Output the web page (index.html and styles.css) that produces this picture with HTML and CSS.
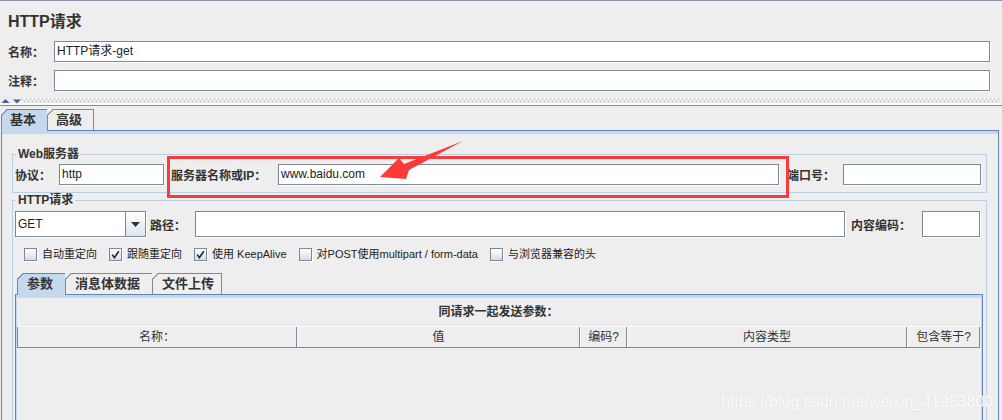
FILE: index.html
```html
<!DOCTYPE html>
<html lang="zh">
<head>
<meta charset="utf-8">
<title>HTTP请求</title>
<link rel="stylesheet" href="styles.css">
</head>
<body>
<div class="app">
  <div class="header">
    <h1 class="title">HTTP请求</h1>
    <div class="form-row"><span class="lbl lbl-top">名称：</span><div class="field grow">HTTP请求-get</div></div>
    <div class="form-row"><span class="lbl lbl-top">注释：</span><div class="field grow"></div></div>
  </div>

  <div class="splitter">
    <svg class="split-arrows" width="22" height="5" viewBox="0 0 22 5">
      <polygon points="1.5,4 5.5,0 9.5,4" fill="#41639a"/>
      <polygon points="13,0.5 21,0.5 17,4.5" fill="#41639a"/>
    </svg>
    <span class="dots"></span>
  </div>

  <div class="tabs main-tabs">
    <div class="tab main-tab selected">基本</div>
    <div class="tab main-tab last">高级</div>
  </div>

  <div class="main-panel">
    <fieldset class="group g-web">
      <legend>Web服务器</legend>
      <div class="row row-web">
        <span class="lbl w-proto">协议：</span>
        <div class="field f-proto">http</div>
        <span class="lbl w-host">服务器名称或IP：</span>
        <div class="field grow">www.baidu.com</div>
        <span class="lbl w-port">端口号：</span>
        <div class="field f-port"></div>
      </div>
    </fieldset>

    <fieldset class="group g-http">
      <legend>HTTP请求</legend>
      <div class="row row-req">
        <div class="combo">
          <div class="combo-text">GET</div>
          <div class="combo-btn">
            <svg width="9" height="5" viewBox="0 0 9 5"><polygon points="0,0 9,0 4.5,5" fill="#333"/></svg>
          </div>
        </div>
        <span class="lbl w-path">路径：</span>
        <div class="field grow tall"></div>
        <span class="lbl w-enc">内容编码：</span>
        <div class="field f-enc tall"></div>
      </div>

      <div class="checks">
        <label class="check"><span class="cb"></span>自动重定向</label>
        <label class="check"><span class="cb"><svg width="9" height="9" viewBox="0 0 9 9"><path d="M1.2 4.6 L3.4 7.6 L7.8 1.2" fill="none" stroke="#222" stroke-width="1.6"/></svg></span>跟随重定向</label>
        <label class="check"><span class="cb"><svg width="9" height="9" viewBox="0 0 9 9"><path d="M1.2 4.6 L3.4 7.6 L7.8 1.2" fill="none" stroke="#222" stroke-width="1.6"/></svg></span>使用 KeepAlive</label>
        <label class="check"><span class="cb"></span>对POST使用multipart / form-data</label>
        <label class="check"><span class="cb"></span>与浏览器兼容的头</label>
      </div>

      <div class="tabs sub-tabs">
        <div class="tab sub-tab selected">参数</div>
        <div class="tab sub-tab">消息体数据</div>
        <div class="tab sub-tab last">文件上传</div>
      </div>
      <div class="sub-panel">
        <div class="caption">同请求一起发送参数：</div>
        <div class="thead">
          <div class="th">名称：</div>
          <div class="th">值</div>
          <div class="th">编码?</div>
          <div class="th">内容类型</div>
          <div class="th">包含等于?</div>
        </div>
      </div>
    </fieldset>
  </div>

  <div class="annot-box"></div>
  <svg class="annot-arrow" width="100" height="60" viewBox="0 0 100 60">
    <polygon points="10,46 29,27 34,33 93,10 39,39 36,48" fill="#fb3a3a"/>
  </svg>
  <div class="watermark">https://blog.csdn.net/weixin_41953800</div>
</div>
</body>
</html>
```

FILE: styles.css
```css
* { box-sizing: border-box; }
html, body { margin: 0; padding: 0; }
body {
  background: #eeeeee;
  font-family: "Liberation Sans", "Noto Sans CJK SC", sans-serif;
  color: #333;
}
.app {
  position: relative;
  width: 1002px;
  height: 420px;
  overflow: hidden;
  border-top: 1px solid #8a98a6;
}

/* header */
.title {
  margin: 11px 0 0 8px;
  font-size: 16px;
  line-height: 20px;
  font-weight: bold;
  color: #333;
}
.form-row {
  display: flex;
  align-items: center;
  height: 21px;
  margin-top: 9px;
  padding: 0 12px 0 8px;
}
.form-row + .form-row { margin-top: 8px; }
.lbl {
  font-size: 12px;
  font-weight: bold;
  white-space: nowrap;
  color: #333;
  flex: none;
}
.lbl-top { width: 46px; }
.field {
  height: 21px;
  border: 1px solid #7a8a99;
  background: #fff;
  box-shadow: 1px 1px 0 #fff;
  font-size: 12px;
  line-height: 19px;
  padding-left: 2px;
  white-space: nowrap;
  overflow: hidden;
  color: #222;
  flex: none;
}
.field.grow { flex: 1; min-width: 0; }
.field.tall { height: 26px; line-height: 24px; }

/* splitter */
.splitter {
  display: flex;
  align-items: flex-start;
  margin-top: 4px;
  height: 11px;
  padding-top: 4px;
  border-bottom: 1px solid #7a8ea8;
  box-shadow: inset 0 -2px 0 #fafafa;
}
.split-arrows { display: block; flex: none; }
.dots {
  flex: 1;
  height: 3px;
  margin-right: 2px;
  background:
    linear-gradient(90deg, #9ca7b3 1px, transparent 1px) 0 0 / 4px 1px repeat-x,
    linear-gradient(90deg, #9ca7b3 1px, transparent 1px) 2px 2px / 4px 1px repeat-x;
}

/* tabs */
.tabs {
  display: flex;
  position: relative;
  z-index: 1;
  margin-bottom: -1px;
}
.main-tabs { margin-top: 3px; padding-left: 1px; }
.tab {
  position: relative;
  height: 22px;
  font-size: 13px;
  font-weight: bold;
  line-height: 20px;
  color: #333;
  background: #eeeeee;
  border-top: 1px solid #7a8a99;
  border-left: 1px solid #7a8a99;
  border-bottom: 1px solid #6382bf;
  clip-path: polygon(6px 0, 100% 0, 100% 100%, 0 100%, 0 6px);
}
.tab::before {
  content: "";
  position: absolute;
  left: -1px;
  top: -1px;
  width: 7px;
  height: 7px;
  background: linear-gradient(to bottom right, transparent calc(50% - 1px), #7a8a99 calc(50% - 1px), #7a8a99 calc(50% + 0.4px), transparent calc(50% + 0.4px));
}
.tab.last { border-right: 1px solid #7a8a99; }
.tab.selected {
  background: #c4d8ee;
  border-top-color: #6382bf;
  border-left-color: #6382bf;
  border-bottom-color: #c4d8ee;
}
.tab.selected::before {
  background: linear-gradient(to bottom right, transparent calc(50% - 1px), #6382bf calc(50% - 1px), #6382bf calc(50% + 0.4px), transparent calc(50% + 0.4px));
}
.main-tab { padding: 0 11px 0 8px; }
.sub-tab { padding: 0 12px 0 9px; height: 22px; }
.sub-tab.last { padding-right: 7px; }

/* main panel */
.main-panel {
  margin-left: 1px;
  width: 998px;
  height: 300px;
  border: 1px solid #6382bf;
  border-bottom: none;
  box-shadow: inset 0 3px 0 #c4d8ee;
  padding: 16px 11px 0 10px;
}

/* fieldsets */
.group {
  margin: 0;
  min-width: 0;
  border: 1px solid #b8cfe5;
  padding: 0 3px 7px 2px;
}
.group legend {
  margin-left: 1px;
  padding: 0 2px;
  font-size: 12px;
  font-weight: bold;
  line-height: 14px;
  color: #333;
}
.g-http { height: 240px; padding-bottom: 0; }

.row {
  display: flex;
  align-items: center;
}
.row-web { margin-top: 3px; height: 21px; }
.w-proto { width: 44px; }
.f-proto { width: 105px; }
.w-host { width: 107px; margin-left: 7px; }
.w-port { width: 64px; padding-left: 8px; }
.f-port { width: 138px; margin-right: 2px; }

.row-req { margin-top: 4px; height: 26px; }
.combo {
  display: flex;
  width: 131px;
  height: 26px;
  flex: none;
  border: 1px solid #7a8a99;
  background: #fff;
  box-shadow: 1px 1px 0 #fff;
}
.combo-text {
  flex: 1;
  font-size: 12px;
  line-height: 24px;
  padding-left: 2px;
  color: #222;
}
.combo-btn {
  width: 20px;
  display: flex;
  align-items: center;
  justify-content: center;
  border-left: 1px solid #7a8a99;
  background: linear-gradient(#ffffff, #dce5ef);
}
.combo-btn svg { display: block; }
.w-path { width: 49px; padding-left: 4px; }
.w-enc { width: 77px; padding-left: 6px; }
.f-enc { width: 58px; margin-right: 3px; }

/* checkboxes */
.checks {
  display: flex;
  align-items: center;
  gap: 12px;
  margin-top: 11px;
  height: 13px;
  padding-left: 9px;
}
.check {
  display: flex;
  align-items: center;
  gap: 5px;
  font-size: 11px;
  line-height: 13px;
  color: #222;
  white-space: nowrap;
}
.cb {
  width: 13px;
  height: 13px;
  flex: none;
  display: flex;
  align-items: center;
  justify-content: center;
  border: 1px solid #7a8a99;
  background: linear-gradient(#ffffff, #d3deea);
  box-shadow: 1px 1px 0 #fff;
}
.cb svg { display: block; }

/* sub tabs & panel */
.sub-tabs { margin-top: 12px; padding-left: 2px; }
.sub-panel {
  height: 140px;
  border: 1px solid #6382bf;
  border-bottom: none;
  box-shadow: inset 0 3px 0 #c4d8ee, inset 1px 0 0 #c4d8ee, inset -1px 0 0 #c4d8ee;
  padding: 9px 2px 0 1px;
}
.caption {
  text-align: center;
  font-size: 12px;
  font-weight: bold;
  line-height: 16px;
  color: #333;
}
.thead {
  display: grid;
  grid-template-columns: 280px 283px 47px 280px 1fr;
  height: 22px;
  margin-top: 6px;
  border-top: 1px solid #fafafa;
  border-bottom: 1px solid #7a8a99;
}
.th {
  border-left: 1px solid #fafafa;
  border-right: 1px solid #7a8a99;
  font-size: 12px;
  line-height: 20px;
  text-align: center;
  color: #333;
  white-space: nowrap;
}
.th:first-child { border-left-color: #7a8a99; }

/* annotations */
.annot-box {
  position: absolute;
  left: 167px;
  top: 155px;
  width: 622px;
  height: 42px;
  border: 3px solid #fb3a3a;
}
.annot-arrow {
  position: absolute;
  left: 370px;
  top: 130px;
}
.watermark {
  position: absolute;
  left: 721px;
  top: 391px;
  font-family: "Liberation Sans", sans-serif;
  font-size: 16px;
  line-height: 20px;
  color: rgba(255, 255, 255, 0.95);
  text-shadow: 0 0 1px rgba(160, 160, 160, 0.25);
  white-space: nowrap;
}
```
